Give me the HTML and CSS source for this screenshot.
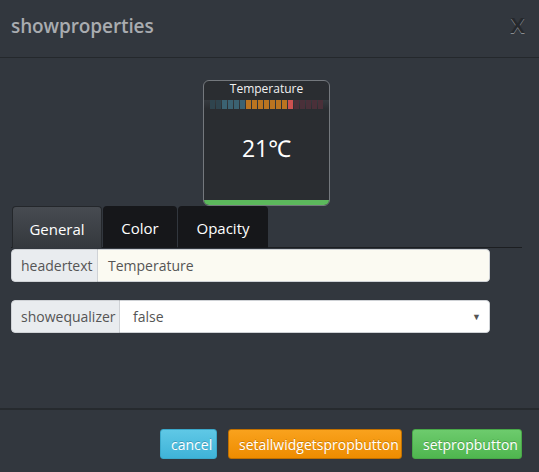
FILE: index.html
```html
<!DOCTYPE html>
<html>
<head>
<meta charset="utf-8">
<link rel="stylesheet" href="styles.css">
</head>
<body>
<div class="modal">
  <div class="modal-header">
    <h4 class="modal-title">showproperties</h4>
    <span class="close">X</span>
  </div>
  <div class="modal-body">
    <div class="preview">
      <div class="widget">
        <div class="widget-title">Temperature</div>
        <div class="eq">
          <span class="seg dim-teal"></span><span class="seg dim-teal"></span>
          <span class="seg teal"></span><span class="seg teal"></span><span class="seg teal"></span><span class="seg teal"></span>
          <span class="seg orange"></span><span class="seg orange"></span><span class="seg orange"></span><span class="seg orange"></span><span class="seg orange"></span><span class="seg orange"></span><span class="seg orange"></span>
          <span class="seg red"></span>
          <span class="seg dim-red"></span><span class="seg dim-red"></span><span class="seg dim-red"></span><span class="seg dim-red"></span><span class="seg dim-red"></span>
        </div>
        <div class="widget-value">21℃</div>
        <div class="widget-bar"></div>
      </div>
    </div>
    <div class="tabs">
      <div class="tab active tab-general">General</div>
      <div class="tab tab-color">Color</div>
      <div class="tab tab-opacity">Opacity</div>
    </div>
    <div class="input-group">
      <span class="addon addon-header">headertext</span>
      <span class="control text-control">Temperature</span>
    </div>
    <div class="input-group second">
      <span class="addon addon-eq">showequalizer</span>
      <span class="control select-control"><span>false</span><span class="caret">▼</span></span>
    </div>
  </div>
  <div class="modal-footer">
    <button class="btn btn-info">cancel</button>
    <button class="btn btn-warning">setallwidgetspropbutton</button>
    <button class="btn btn-success">setpropbutton</button>
  </div>
</div>
</body>
</html>
```

FILE: styles.css
```css
* { box-sizing: border-box; }
html, body { margin: 0; padding: 0; }
body {
  background: #32373e;
  font-family: "Open Sans", "Noto Sans", sans-serif;
  width: 539px;
  height: 472px;
  overflow: hidden;
}
.modal {
  display: flex;
  flex-direction: column;
  height: 472px;
}
.modal-header {
  height: 58px;
  border-bottom: 1px solid #24282c;
  display: flex;
  align-items: center;
  justify-content: space-between;
  padding: 0 14px 0 11px;
}
.modal-title {
  margin: 0;
  font-size: 19px;
  font-weight: 600;
  color: #a9acb0;
  letter-spacing: -0.1px;
  position: relative;
  top: -3px;
}
.close {
  font-size: 22px;
  font-weight: 700;
  color: #26292d;
  text-shadow: 0 1px 0 #8a8d91;
  position: relative;
  top: -3px;
  font-family: "Liberation Sans", sans-serif;
}
.modal-body {
  flex: 1;
  padding: 22px 17px 0 11px;
}
.preview {
  display: flex;
  justify-content: center;
}
.widget {
  width: 127px;
  height: 126px;
  border: 1px solid #74787d;
  border-radius: 6px;
  background: #2a2d31;
  display: flex;
  flex-direction: column;
  align-items: center;
  overflow: hidden;
}
.widget-title {
  color: #f2f2f2;
  font-size: 12px;
  line-height: 14px;
  margin-top: 1px;
}
.eq {
  margin-top: 4px;
  width: 100%;
  height: 9px;
  display: flex;
  justify-content: center;
  gap: 1px;
  background: linear-gradient(#363a3f, #2a2d31);
}
.seg { width: 5px; height: 9px; }
.dim-teal { background: #2f444e; }
.teal { background: #3b6272; }
.orange { background: #bb7420; }
.red { background: #cc5250; }
.dim-red { background: #4a3039; }
.widget-value {
  color: #ffffff;
  font-size: 23px;
  margin-top: 24px;
  line-height: 30px;
}
.widget-bar {
  margin-top: auto;
  width: 100%;
  height: 5px;
  background: #5cb85c;
}
.tabs {
  display: flex;
  gap: 1px;
  padding-left: 1px;
  border-bottom: 1px solid #1c1e21;
  height: 42px;
}
.tab {
  height: 42px;
  border-radius: 4px 4px 0 0;
  background: #16171a;
  color: #ffffff;
  font-size: 15px;
  display: flex;
  align-items: center;
  justify-content: center;
  padding-top: 2px;
}
.tab-general { width: 90px; }
.tab-color { width: 74px; }
.tab-opacity { width: 90px; }
.tab.active {
  background: linear-gradient(#474b51, #34383d);
  border: 1px solid #24272b;
  border-bottom: none;
}
.input-group {
  display: flex;
  width: 479px;
  height: 33px;
  margin-top: 1px;
  border-radius: 4px;
  overflow: hidden;
  font-size: 14px;
  color: #555555;
}
.input-group.second { margin-top: 18px; }
.addon {
  background: #e9ecef;
  border: 1px solid #cfd2d6;
  border-radius: 4px 0 0 4px;
  display: flex;
  align-items: center;
  padding: 0 9px;
}
.addon-header { width: 87px; }
.addon-eq { width: 109px; }
.control {
  flex: 1;
  border: 1px solid #cfd2d6;
  border-left: none;
  border-radius: 0 4px 4px 0;
  display: flex;
  align-items: center;
}
.text-control {
  background: #fbfaf2;
  padding-left: 10px;
}
.select-control {
  background: #ffffff;
  padding: 0 8px 0 13px;
  justify-content: space-between;
}
.caret {
  font-size: 9px;
  color: #555;
}
.modal-footer {
  height: 64px;
  border-top: 2px solid #262a2e;
  display: flex;
  justify-content: flex-end;
  align-items: flex-start;
  gap: 10px;
  padding: 19px 17px 0 0;
}
.btn {
  height: 30px;
  border-radius: 3px;
  font-family: inherit;
  font-size: 14px;
  color: #ffffff;
  text-shadow: 0 -1px 0 rgba(0,0,0,0.2);
  padding: 0 10px;
  border: 1px solid transparent;
  margin: 0;
}
.btn-info {
  width: 57px;
  background: linear-gradient(#5fc8e6, #3fb3d8);
  border-color: #3aa8ca;
  margin-right: 1px;
}
.btn-warning {
  width: 174px;
  background: linear-gradient(#f9a21d, #ee8c00);
  border-color: #c06f00;
}
.btn-success {
  width: 110px;
  background: linear-gradient(#6dcb6d, #4fb64f);
  border-color: #48a848;
}
```
